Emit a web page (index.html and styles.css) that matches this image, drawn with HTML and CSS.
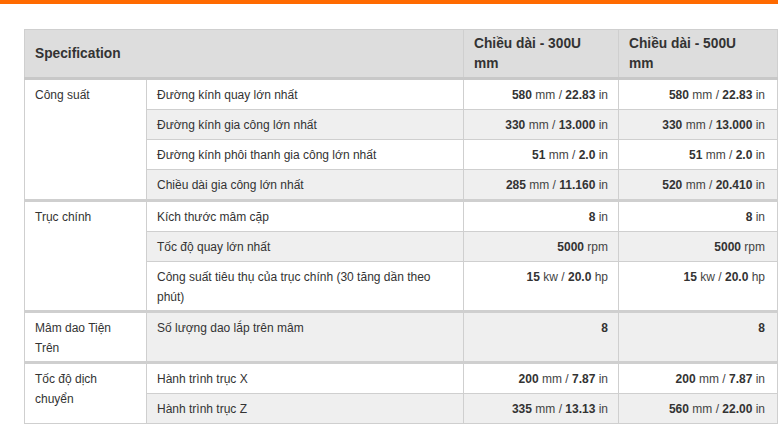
FILE: index.html
```html
<!DOCTYPE html>
<html lang="vi">
<head>
<meta charset="utf-8">
<title>Specification</title>
<link rel="stylesheet" href="styles.css">
</head>
<body>
<div class="topbar"></div>
<div class="wrap">
<table class="spec">
  <colgroup>
    <col class="c1"><col class="c2"><col class="c3"><col class="c4">
  </colgroup>
  <thead>
    <tr>
      <th colspan="2" class="mid">Specification</th>
      <th class="hv">Chiều dài - 300U mm</th>
      <th class="hv">Chiều dài - 500U mm</th>
    </tr>
  </thead>
  <tbody>
    <tr class="first">
      <td rowspan="4" class="grp">Công suất</td>
      <td>Đường kính quay lớn nhất</td>
      <td class="v"><b>580</b> mm / <b>22.83</b> in</td>
      <td class="v last"><b>580</b> mm / <b>22.83</b> in</td>
    </tr>
    <tr class="alt">
      <td>Đường kính gia công lớn nhất</td>
      <td class="v"><b>330</b> mm / <b>13.000</b> in</td>
      <td class="v last"><b>330</b> mm / <b>13.000</b> in</td>
    </tr>
    <tr>
      <td>Đường kính phôi thanh gia công lớn nhất</td>
      <td class="v"><b>51</b> mm / <b>2.0</b> in</td>
      <td class="v last"><b>51</b> mm / <b>2.0</b> in</td>
    </tr>
    <tr class="alt">
      <td>Chiều dài gia công lớn nhất</td>
      <td class="v"><b>285</b> mm / <b>11.160</b> in</td>
      <td class="v last"><b>520</b> mm / <b>20.410</b> in</td>
    </tr>
    <tr class="first">
      <td rowspan="3" class="grp">Trục chính</td>
      <td>Kích thước mâm cặp</td>
      <td class="v"><b>8</b> in</td>
      <td class="v last"><b>8</b> in</td>
    </tr>
    <tr class="alt">
      <td>Tốc độ quay lớn nhất</td>
      <td class="v"><b>5000</b> rpm</td>
      <td class="v last"><b>5000</b> rpm</td>
    </tr>
    <tr class="two">
      <td>Công suất tiêu thụ của trục chính (30 tăng dần theo phút)</td>
      <td class="v"><b>15</b> kw / <b>20.0</b> hp</td>
      <td class="v last"><b>15</b> kw / <b>20.0</b> hp</td>
    </tr>
    <tr class="first alt two">
      <td class="grp">Mâm dao Tiện Trên</td>
      <td>Số lượng dao lắp trên mâm</td>
      <td class="v"><b>8</b></td>
      <td class="v last"><b>8</b></td>
    </tr>
    <tr class="first">
      <td rowspan="2" class="grp">Tốc độ dịch chuyển</td>
      <td>Hành trình trục X</td>
      <td class="v"><b>200</b> mm / <b>7.87</b> in</td>
      <td class="v last"><b>200</b> mm / <b>7.87</b> in</td>
    </tr>
    <tr class="alt">
      <td>Hành trình trục Z</td>
      <td class="v"><b>335</b> mm / <b>13.13</b> in</td>
      <td class="v last"><b>560</b> mm / <b>22.00</b> in</td>
    </tr>
  </tbody>
</table>
</div>
</body>
</html>
```

FILE: styles.css
```css
html, body {
  margin: 0;
  padding: 0;
  background: #fff;
}
body {
  font-family: "Liberation Sans", Arial, sans-serif;
  font-size: 12px;
  color: #333;
}
.topbar {
  height: 4px;
  background: #ff6a00;
}
.wrap {
  padding: 25px 0 0 24px;
}
.spec {
  border-collapse: collapse;
  width: 753px;
  table-layout: fixed;
}
.c1 { width: 122px; }
.c2 { width: 317px; }
.c3 { width: 155px; }
.c4 { width: 159px; }

.spec th, .spec td {
  border: 1px solid #cfcfcf;
  padding: 5px 10px 4px 10px;
  line-height: 20px;
  text-align: left;
  vertical-align: top;
}
.spec thead th {
  background: #dddddd;
  font-weight: bold;
  font-size: 13.75px;
  color: #333;
  border-bottom: 3px solid #c8c8c8;
  padding: 4px 10px 3px 10px;
}
.spec thead th.hv {
  padding-right: 30px;
}
.spec thead th.mid {
  vertical-align: middle;
}
.spec tbody td {
  background: #fff;
}
.spec tbody tr.alt td {
  background: #efefef;
}
.spec tbody td.grp,
.spec tbody tr.alt td.grp {
  background: #fff;
}
.spec tbody tr.first td {
  border-top: 3px solid #cfcfcf;
}
.spec tbody tr.two td {
  padding-top: 5px;
  padding-bottom: 3px;
}
.spec td.v {
  text-align: right;
  color: #444;
}
.spec td.v.last {
  padding-right: 12px;
}
.spec td.v b {
  color: #333;
}
```
